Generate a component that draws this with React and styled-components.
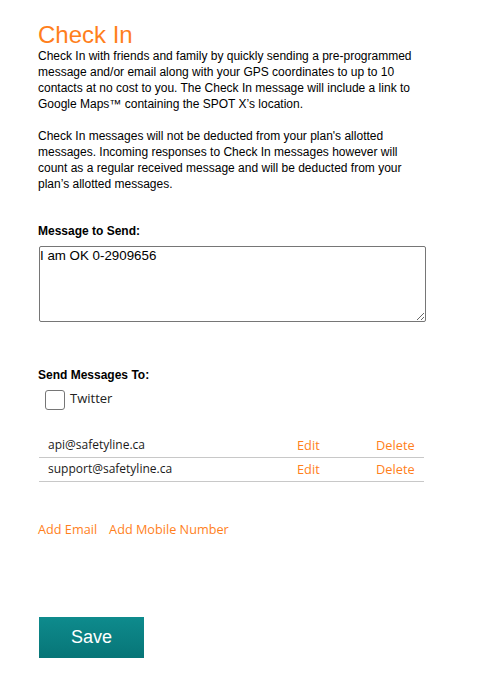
import React from "react";
import styled, { createGlobalStyle } from "styled-components";

const Global = createGlobalStyle`
  html, body { margin: 0; padding: 0; background: #fff; }
  body { font-family: "Liberation Sans", Arial, sans-serif; color: #000; }
`;

const ORANGE = "#ff7f1c";

const Page = styled.div`
  padding: 22px 38px 20px 38px;
  font-size: 12px;
  line-height: 16px;
`;

const Title = styled.h1`
  margin: 0;
  font-size: 24px;
  line-height: 26px;
  font-weight: normal;
  color: ${ORANGE};
`;

const Para = styled.p`
  margin: ${(p) => (p.$gap ? "16px 0 0" : "0")};
  width: 382px;
`;

const Label = styled.div`
  font-weight: bold;
  margin-top: ${(p) => p.$top}px;
`;

const MessageBox = styled.textarea`
  display: block;
  box-sizing: border-box;
  margin: 7px 0 0 1px;
  width: 387px;
  height: 76px;
  padding: 1px 1px 0 0;
  border: 1px solid #767676;
  border-radius: 2px;
  font-family: "Liberation Sans", Arial, sans-serif;
  font-size: 13.33px;
  color: #000;
  outline: none;
`;

const CheckRow = styled.label`
  display: flex;
  align-items: center;
  gap: 5px;
  margin: 7px 0 0 7px;
`;

const Box = styled.input`
  appearance: none;
  margin: 0;
  width: 20px;
  height: 20px;
  box-sizing: border-box;
  border: 1px solid #767676;
  border-radius: 3px;
  background: #fff;
`;

const CheckText = styled.span`
  font-family: "Open Sans", sans-serif;
  font-size: 13px;
  color: #222;
  padding-bottom: 4px;
`;

const Contacts = styled.div`
  margin: 24px 0 0 1px;
  width: 385px;
`;

const ContactRow = styled.div`
  display: grid;
  grid-template-columns: 1fr 79px 57px;
  align-items: center;
  height: 23px;
  padding-bottom: 1px;
  box-sizing: border-box;
  height: 24px;
  border-bottom: 1px solid #c8c8c8;
  font-family: "Open Sans", sans-serif;
`;

const Email = styled.span`
  padding-left: 9px;
  font-size: 12px;
  color: #1a1a1a;
`;

const Action = styled.a`
  padding-left: 9px;
  font-size: 12.8px;
  color: ${ORANGE};
  text-decoration: none;
  cursor: pointer;
`;

const AddLinks = styled.div`
  display: flex;
  gap: 12px;
  margin-top: 38px;
  line-height: 18px;
`;

const AddLink = styled.a`
  font-family: "Open Sans", sans-serif;
  font-size: 12.7px;
  color: ${ORANGE};
  text-decoration: none;
  cursor: pointer;
`;

const SaveButton = styled.button`
  display: block;
  margin: 79px 0 0 1px;
  width: 105px;
  height: 41px;
  border: none;
  background: linear-gradient(#0e8b8d, #077577);
  color: #fff;
  font-family: "Liberation Sans", Arial, sans-serif;
  font-size: 18px;
  cursor: pointer;
`;

const contacts = ["api@safetyline.ca", "support@safetyline.ca"];

export default function App() {
  return (
    <>
      <Global />
      <Page>
        <Title>Check In</Title>
        <Para>
          Check In with friends and family by quickly sending a pre-programmed
          message and/or email along with your GPS coordinates to up to 10
          contacts at no cost to you. The Check In message will include a link to
          Google Maps™ containing the SPOT X’s location.
        </Para>
        <Para $gap>
          Check In messages will not be deducted from your plan's allotted
          messages. Incoming responses to Check In messages however will count as
          a regular received message and will be deducted from your plan’s
          allotted messages.
        </Para>
        <Label $top={31}>Message to Send:</Label>
        <MessageBox defaultValue="I am OK 0-2909656" />
        <Label $top={45}>Send Messages To:</Label>
        <CheckRow>
          <Box type="checkbox" />
          <CheckText>Twitter</CheckText>
        </CheckRow>
        <Contacts>
          {contacts.map((c) => (
            <ContactRow key={c}>
              <Email>{c}</Email>
              <Action>Edit</Action>
              <Action>Delete</Action>
            </ContactRow>
          ))}
        </Contacts>
        <AddLinks>
          <AddLink>Add Email</AddLink>
          <AddLink>Add Mobile Number</AddLink>
        </AddLinks>
        <SaveButton>Save</SaveButton>
      </Page>
    </>
  );
}
